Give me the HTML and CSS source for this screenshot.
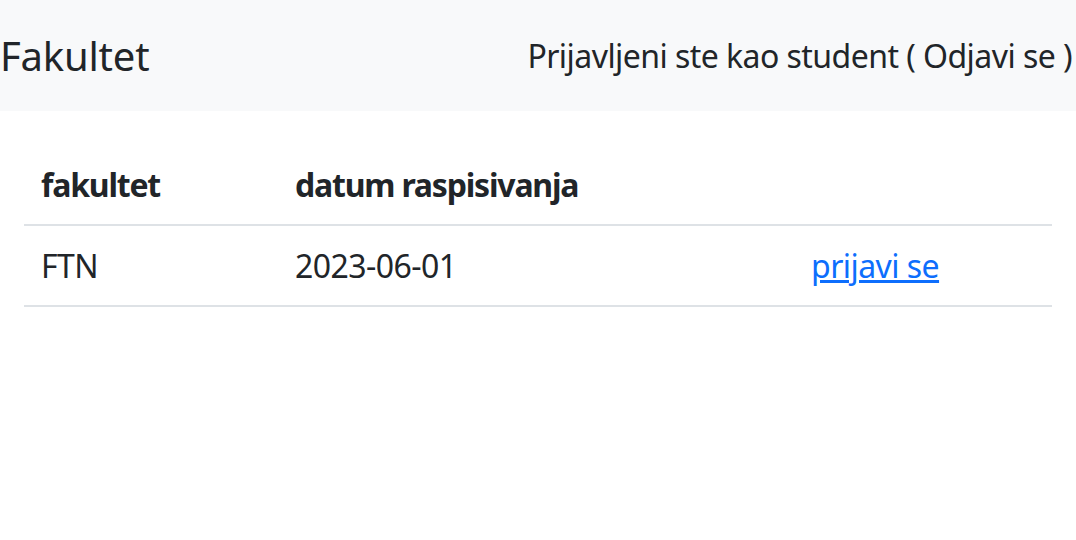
FILE: index.html
```html
<!DOCTYPE html>
<html lang="sr">
<head>
<meta charset="utf-8">
<title>Fakultet</title>
<link rel="stylesheet" href="styles.css">
</head>
<body>
<nav class="navbar">
  <span class="brand">Fakultet</span>
  <span class="user">Prijavljeni ste kao student ( <a class="logout" href="#">Odjavi se</a> )</span>
</nav>
<main class="content">
  <table class="table">
    <thead>
      <tr><th class="c1">fakultet</th><th class="c2">datum raspisivanja</th><th class="c3"></th></tr>
    </thead>
    <tbody>
      <tr><td>FTN</td><td>2023-06-01</td><td><a class="link" href="#">prijavi se</a></td></tr>
    </tbody>
  </table>
</main>
</body>
</html>
```
FILE: styles.css
```css
html, body { margin: 0; padding: 0; }
body {
  font-family: "Noto Sans", "Open Sans", sans-serif;
  font-size: 32px;
  letter-spacing: -0.55px;
  color: #212529;
  background: #fff;
}
.navbar {
  display: flex;
  justify-content: space-between;
  align-items: center;
  height: 111px;
  background: #f8f9fa;
  padding: 0 4px 0 0;
}
.brand {
  font-size: 40px;
  line-height: 60px;
  letter-spacing: -0.2px;
}
.user { line-height: 48px; }
.logout { color: #212529; text-decoration: none; }
.content { margin: 34px 24px 0; }
.table { width: 100%; border-collapse: collapse; }
.table th, .table td {
  text-align: left;
  padding: 16px 17px 15px;
  line-height: 48px;
  border-bottom: 2px solid #dee2e6;
}
.table th { font-weight: 700; letter-spacing: -1.2px; }
.c1 { width: 220px; }
.c2 { width: 482px; }
.link { color: #0d6efd; }
```
